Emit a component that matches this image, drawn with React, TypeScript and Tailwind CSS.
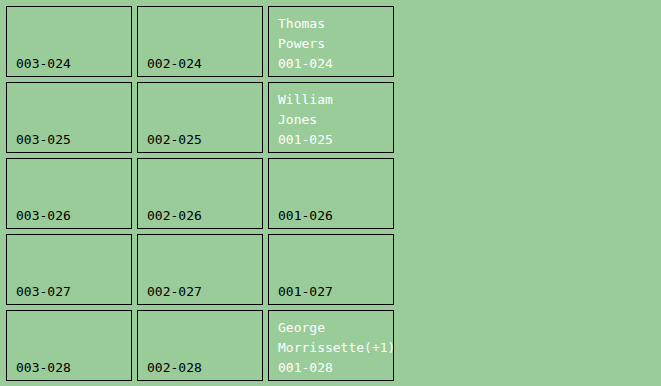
type Slot = { id: string; name?: string[] };

const rows = ["024", "025", "026", "027", "028"];

const names: Record<string, string[]> = {
  "024": ["Thomas", "Powers"],
  "025": ["William", "Jones"],
  "028": ["George", "Morrissette(+1)"],
};

function Cell({ slot }: { slot: Slot }) {
  const taken = !!slot.name;
  return (
    <div
      className={`h-[71px] w-[126px] border border-black flex flex-col justify-end pl-[9px] pb-[2px] text-[13px] leading-[20px] whitespace-nowrap ${
        taken ? "text-white" : "text-black"
      }`}
    >
      {slot.name?.map((line) => (
        <div key={line} className="relative">{line}</div>
      ))}
      <div>{slot.id}</div>
    </div>
  );
}

export default function App() {
  return (
    <div
      className="w-[661px] h-[386px] bg-[#99cc99] pt-[6px] pl-[6px] overflow-hidden"
      style={{ fontFamily: '"DejaVu Sans Mono", monospace' }}
    >
      <div className="grid grid-cols-[126px_126px_126px] gap-[5px]">
        {rows.map((r) => (
          <>
            <Cell key={`003-${r}`} slot={{ id: `003-${r}` }} />
            <Cell key={`002-${r}`} slot={{ id: `002-${r}` }} />
            <Cell key={`001-${r}`} slot={{ id: `001-${r}`, name: names[r] }} />
          </>
        ))}
      </div>
    </div>
  );
}
